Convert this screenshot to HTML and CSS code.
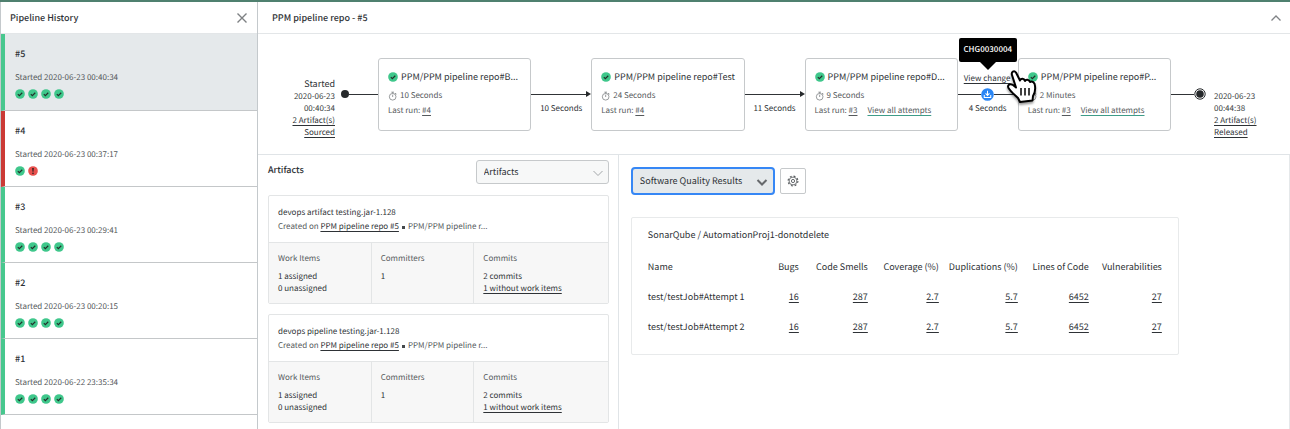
FILE: index.html
```html
<!DOCTYPE html>
<html lang="en">
<head>
<meta charset="utf-8">
<title>Pipeline History</title>
<link rel="stylesheet" href="styles.css">
</head>
<body>
<svg class="defs" aria-hidden="true">
  <symbol id="ok" viewBox="0 0 12 12"><circle cx="6" cy="6" r="5.800" fill="#3fc78b"/><path d="M3.400 6.200l1.800 1.800 3.500-3.500" fill="none" stroke="#23302b" stroke-width="1.400"/></symbol>
  <symbol id="fail" viewBox="0 0 12 12"><circle cx="6" cy="6" r="5.800" fill="#e8504d"/><path d="M5 2.300h2l-.4 4.500h-1.200z" fill="#2b2020"/><circle cx="6" cy="8.800" r="1" fill="#2b2020"/></symbol>
  <symbol id="watch" viewBox="0 0 12 12"><g fill="none" stroke="#777b7e" stroke-width=".9"><circle cx="5.600" cy="6.900" r="4"/><path d="M5.600 7.200V4.400M4 1.400h3.200M5.600 1.400v1.500M8.400 2.400l1.600 1.600M8.900 3.900l.6-.7"/></g></symbol>
  <symbol id="chevron" viewBox="0 0 12 12"><path d="M1.500 4l4.500 4.500L10.500 4" fill="none" stroke="currentColor"/></symbol>
</svg>
<div class="app">
  <aside class="history">
    <header class="bar">
      <h2 class="bar-title">Pipeline History</h2>
      <button class="icon-button" aria-label="Close"><svg class="close" viewBox="0 0 12 12"><path d="M1.500 1.500l9 9M10.500 1.500l-9 9" stroke="#7d8083" stroke-width="1.400"/></svg></button>
    </header>
    <ul class="runs">
      <li class="run run-selected"><h3 class="run-name">#5</h3><p class="run-time">Started 2020-06-23 00:40:34</p><div class="run-icons"><svg class="status"><use href="#ok"/></svg><svg class="status"><use href="#ok"/></svg><svg class="status"><use href="#ok"/></svg><svg class="status"><use href="#ok"/></svg></div></li>
      <li class="run run-failed"><h3 class="run-name">#4</h3><p class="run-time">Started 2020-06-23 00:37:17</p><div class="run-icons"><svg class="status"><use href="#ok"/></svg><svg class="status"><use href="#fail"/></svg></div></li>
      <li class="run"><h3 class="run-name">#3</h3><p class="run-time">Started 2020-06-23 00:29:41</p><div class="run-icons"><svg class="status"><use href="#ok"/></svg><svg class="status"><use href="#ok"/></svg><svg class="status"><use href="#ok"/></svg><svg class="status"><use href="#ok"/></svg></div></li>
      <li class="run"><h3 class="run-name">#2</h3><p class="run-time">Started 2020-06-23 00:20:15</p><div class="run-icons"><svg class="status"><use href="#ok"/></svg><svg class="status"><use href="#ok"/></svg><svg class="status"><use href="#ok"/></svg><svg class="status"><use href="#ok"/></svg></div></li>
      <li class="run"><h3 class="run-name">#1</h3><p class="run-time">Started 2020-06-22 23:35:34</p><div class="run-icons"><svg class="status"><use href="#ok"/></svg><svg class="status"><use href="#ok"/></svg><svg class="status"><use href="#ok"/></svg><svg class="status"><use href="#ok"/></svg></div></li>
    </ul>
  </aside>
  <main class="detail">
    <header class="bar bar-main">
      <h1 class="bar-title">PPM pipeline repo - #5</h1>
      <button class="icon-button" aria-label="Collapse"><svg class="collapse" viewBox="0 0 12 12"><path d="M1.500 8.500L6 4l4.500 4.500" fill="none" stroke="#808386" stroke-width="1.300"/></svg></button>
    </header>
    <section class="flow">
      <div class="flow-end flow-start"><span class="flow-label">Started</span><span>2020-06-23</span><span>00:40:34</span><a href="#">2 Artifact(s)</a><a href="#">Sourced</a></div>
      <div class="edge edge-start"><i class="dot"></i><i class="line"></i></div>
      <article class="stage">
        <h3 class="stage-title"><svg class="status"><use href="#ok"/></svg>PPM/PPM pipeline repo#B...</h3>
        <p class="stage-time"><svg class="status"><use href="#watch"/></svg>10 Seconds</p>
        <p class="stage-last"><span>Last run: <a href="#">#4</a></span></p>
      </article>
      <div class="link"><div class="edge"><i class="line"></i><i class="arrow"></i></div><span>10 Seconds</span></div>
      <article class="stage">
        <h3 class="stage-title"><svg class="status"><use href="#ok"/></svg>PPM/PPM pipeline repo#Test</h3>
        <p class="stage-time"><svg class="status"><use href="#watch"/></svg>24 Seconds</p>
        <p class="stage-last"><span>Last run: <a href="#">#4</a></span></p>
      </article>
      <div class="link"><div class="edge"><i class="line"></i><i class="arrow"></i></div><span>11 Seconds</span></div>
      <article class="stage">
        <h3 class="stage-title"><svg class="status"><use href="#ok"/></svg>PPM/PPM pipeline repo#D...</h3>
        <p class="stage-time"><svg class="status"><use href="#watch"/></svg>9 Seconds</p>
        <p class="stage-last"><span>Last run: <a href="#">#3</a></span><a class="attempts" href="#">View all attempts</a></p>
      </article>
      <div class="link">
        <a class="change" href="#">View change</a>
        <div class="edge"><i class="line"></i><svg class="gate" viewBox="0 0 14 14"><circle cx="7" cy="7" r="6.800" fill="#2a86f5"/><path d="M7 3v4.800M4.900 5.900L7 8l2.100-2.100M3.500 7.500v2.800h7V7.500" fill="none" stroke="#fff" stroke-width="1.100"/></svg><i class="line"></i></div>
        <span>4 Seconds</span>
        <div class="tip" role="tooltip">CHG0030004</div>
        <svg class="hand" viewBox="0 0 32 36"><path d="M6 6C5 3 8 1 10 3.500L14 11.500C15 9 18 9 19 12C20 10 23 10.500 24 13C26 12 29 13 29 17C29.500 21 29 24 27 27L26.500 31.500L14 33L12 29C9 26 5 23 2.500 19C1 16 4 14 7 16L10 18.500Z" fill="#fff" stroke="#000" stroke-width="2" stroke-linejoin="round"/><path d="M15 19v7.500M19 19v7.500M23 19v7.500" stroke="#000" stroke-width="1.500"/></svg>
      </div>
      <article class="stage">
        <h3 class="stage-title"><svg class="status"><use href="#ok"/></svg>PPM/PPM pipeline repo#P...</h3>
        <p class="stage-time"><svg class="status"><use href="#watch"/></svg>2 Minutes</p>
        <p class="stage-last"><span>Last run: <a href="#">#3</a></span><a class="attempts" href="#">View all attempts</a></p>
      </article>
      <div class="edge edge-end"><i class="line"></i><svg class="target" viewBox="0 0 12 12"><circle cx="6" cy="6" r="5.200" fill="#fff" stroke="#26292b"/><circle cx="6" cy="6" r="3.800" fill="#26292b"/></svg></div>
      <div class="flow-end flow-finish"><span>2020-06-23</span><span>00:44:38</span><a href="#">2 Artifact(s)</a><a href="#">Released</a></div>
    </section>
    <div class="panes">
      <section class="artifacts">
        <div class="artifacts-head">
          <h2 class="section-title">Artifacts</h2>
          <div class="picker"><select class="select" aria-label="Result type"><option>Artifacts</option></select><svg class="chevron"><use href="#chevron"/></svg></div>
        </div>
        <article class="card">
          <div class="card-top"><h3 class="card-title">devops artifact testing.jar-1.128</h3><p class="created">Created on <a href="#">PPM pipeline repo #5</a><i class="bullet"></i>PPM/PPM pipeline r...</p></div>
          <dl class="facts">
            <div class="fact"><dt>Work Items</dt><dd>1 assigned</dd><dd>0 unassigned</dd></div>
            <div class="fact"><dt>Committers</dt><dd>1</dd></div>
            <div class="fact"><dt>Commits</dt><dd>2 commits</dd><dd><a href="#">1 without work items</a></dd></div>
          </dl>
        </article>
        <article class="card">
          <div class="card-top"><h3 class="card-title">devops pipeline testing.jar-1.128</h3><p class="created">Created on <a href="#">PPM pipeline repo #5</a><i class="bullet"></i>PPM/PPM pipeline r...</p></div>
          <dl class="facts">
            <div class="fact"><dt>Work Items</dt><dd>1 assigned</dd><dd>0 unassigned</dd></div>
            <div class="fact"><dt>Committers</dt><dd>1</dd></div>
            <div class="fact"><dt>Commits</dt><dd>2 commits</dd><dd><a href="#">1 without work items</a></dd></div>
          </dl>
        </article>
      </section>
      <section class="quality">
        <div class="tools">
          <div class="picker picker-active"><select class="select" aria-label="Report"><option>Software Quality Results</option></select><svg class="chevron"><use href="#chevron"/></svg></div>
          <button class="gear-button" aria-label="Settings"><svg class="gear" viewBox="0 0 12 12"><g fill="none" stroke="#55595c"><circle cx="6" cy="6" r="3.900" stroke-width=".8"/><circle cx="6" cy="6" r="4.900" stroke-width="1.100" stroke-dasharray="1.924 1.924"/><circle cx="6" cy="6" r="1.600" stroke-width=".9"/></g></svg></button>
        </div>
        <div class="report">
          <h2 class="report-title">SonarQube / AutomationProj1-donotdelete</h2>
          <table class="metrics">
            <colgroup><col class="c-name"><col class="c-bugs"><col class="c-smells"><col class="c-cover"><col class="c-dup"><col class="c-lines"><col class="c-vuln"></colgroup>
            <thead><tr><th>Name</th><th>Bugs</th><th>Code Smells</th><th>Coverage (%)</th><th>Duplications (%)</th><th>Lines of Code</th><th>Vulnerabilities</th></tr></thead>
            <tbody>
              <tr><td>test/testJob#Attempt 1</td><td><a href="#">16</a></td><td><a href="#">287</a></td><td><a href="#">2.7</a></td><td><a href="#">5.7</a></td><td><a href="#">6452</a></td><td><a href="#">27</a></td></tr>
              <tr><td>test/testJob#Attempt 2</td><td><a href="#">16</a></td><td><a href="#">287</a></td><td><a href="#">2.7</a></td><td><a href="#">5.7</a></td><td><a href="#">6452</a></td><td><a href="#">27</a></td></tr>
            </tbody>
          </table>
        </div>
      </section>
    </div>
  </main>
</div>
</body>
</html>
```
FILE: styles.css
```css
* { box-sizing: border-box; }
body, h1, h2, h3, p, ul, dl, dd { margin: 0; padding: 0; }
body {
  font-family: "Noto Sans CJK SC", "Noto Sans", sans-serif;
  font-size: 8px;
  line-height: 12px;
  text-rendering: geometricPrecision;
  color: #2e3236;
  background: #fff;
}
h1, h2, h3 { font-weight: 500; }
a { color: inherit; text-decoration: underline; text-underline-offset: 2px; }
button { padding: 0; border: 0; background: none; font: inherit; }
svg { display: block; flex: none; }
i { display: block; flex: none; }
.defs { display: none; }

.app { display: grid; grid-template-columns: 1fr 4fr; min-height: 100vh; border-top: 2px solid #4f806f; }
.history { border-left: 1px solid #c4c9cc; border-right: 1px solid #c4c9cc; }
.detail { min-width: 0; display: flex; flex-direction: column; }

.bar { display: flex; align-items: center; justify-content: space-between; height: 32px; padding: 0 9px; border-bottom: 1px solid #e3e6e8; }
.bar-main { padding: 0 8px 0 14px; }
.bar-title { font-size: 9px; line-height: 16px; }
.icon-button { display: flex; }
.close, .collapse { width: 12px; height: 12px; }

.runs { list-style: none; }
.run { padding: 13px 10px 9px; border-left: 4px solid #48c78e; border-bottom: 1px solid #c4c7c9; }
.run-selected { padding-bottom: 10px; background: #e5e9eb; }
.run-failed { border-left-color: #cb3a36; }
.run-name { font-size: 9px; line-height: 14px; margin-bottom: 10px; }
.run-time { line-height: 14px; margin-bottom: 3px; color: #55595c; }
.run-icons { display: flex; gap: 3px; }
.status { width: 10px; height: 10px; }
.run-icons .status { margin: 1px 0; }

.flow { display: flex; align-items: center; height: 121px; border-bottom: 1px solid #e0e4e7; }
.flow-end { display: flex; flex-direction: column; flex: none; color: #3a3e41; }
.flow-end a { color: #2e3236; }
.flow-start { width: 77px; padding-top: 27px; text-align: right; }
.flow-finish { width: 84px; padding: 41px 0 0 8px; }
.flow-label { font-size: 9px; line-height: 14px; color: #2e3236; }
.edge { display: flex; align-items: center; }
.edge-start { width: 37px; margin-left: 6px; }
.edge-end { width: 35px; }
.line { flex: 1; height: 1px; background: #303336; }
.dot { width: 8px; height: 8px; border-radius: 50%; background: #26292b; }
.target { width: 12px; height: 12px; }
.arrow { border: 3px solid transparent; border-left: 5px solid #26292b; border-right: 0; }
.stage { flex: 1; min-width: 0; height: 73px; padding: 10px 9px; border: 1px solid #c6c9cb; border-radius: 3px; color: #55595c; white-space: nowrap; }
.stage-title { display: flex; align-items: center; gap: 3px; margin-bottom: 3px; font-size: 9px; line-height: 16px; color: #2e3236; font-weight: 400; }
.stage-time { display: flex; align-items: center; gap: 2px; line-height: 16px; }
.stage-last { display: flex; gap: 10px; line-height: 14px; }
.attempts { text-decoration-color: #3e9c88; }
.link { position: relative; flex: none; width: 60px; text-align: center; white-space: nowrap; }
.link .edge { height: 14px; }
.link > span { position: absolute; top: 16px; left: 0; right: 0; }
.change { position: absolute; bottom: 16px; left: 6px; }
.gate { width: 13px; height: 13px; }
.tip { position: absolute; bottom: 39px; left: 1px; width: 58px; padding: 6px 0; border-radius: 2px; background: #000; color: #fff; font-weight: 500; }
.tip::after { content: ""; position: absolute; top: 100%; left: 21px; border: 8px solid transparent; border-top-color: #000; border-bottom: 0; }
.hand { position: absolute; top: -18px; left: 48px; width: 32px; height: 36px; filter: drop-shadow(0 2px 1px #0006); z-index: 1; }

.panes { flex: 1; display: grid; grid-template-columns: 35% 1fr; border-right: 1px solid #e5e8ea; }
.artifacts { padding: 5px 9px 5px 10px; border-right: 1px solid #e0e4e7; }
.artifacts-head { display: flex; justify-content: space-between; align-items: flex-start; margin-bottom: 11px; }
.section-title { font-size: 9px; line-height: 20px; }
.picker { position: relative; width: 133px; height: 24px; }
.select { appearance: none; width: 100%; height: 100%; padding: 0 7px; border: 1px solid #c6c9cb; border-radius: 3px; background: #f7f8f8; color: #2e3236; font: inherit; font-size: 9px; text-rendering: inherit; }
.chevron { position: absolute; right: 5px; top: 7px; width: 12px; height: 12px; color: #a3a7aa; pointer-events: none; }
.card { border: 1px solid #e3e5e6; border-radius: 2px; margin-bottom: 10px; }
.card-top { padding: 9px 9px 8px; }
.card-title { font-size: 8px; line-height: 15px; font-weight: 400; }
.created { display: flex; align-items: center; line-height: 14px; white-space: pre; color: #55595c; }
.created a { color: #2e3236; }
.bullet { width: 3px; height: 3px; margin: 0 3px; background: #44484b; }
.facts { display: grid; grid-template-columns: 102fr 103fr 135fr; margin: 0; border-top: 1px solid #e3e5e6; background: #f7f7f7; }
.fact { padding: 10px 9px 8px; }
.fact + .fact { border-left: 1px solid #e3e5e6; }
.fact dt { color: #55595c; margin-bottom: 6px; }

.quality { padding: 12px; }
.tools { display: flex; align-items: center; gap: 5px; margin-bottom: 22px; }
.picker-active { width: 144px; height: 28px; }
.picker-active .select { border: 2px solid #3687f5; border-radius: 4px; background: #e5e9eb; }
.picker-active .chevron { top: 9px; right: 7px; color: #66696c; stroke-width: 2px; }
.gear-button { display: flex; align-items: center; justify-content: center; width: 26px; height: 26px; border: 1px solid #c6c9cb; border-radius: 2px; }
.gear { width: 12px; height: 12px; }
.report { max-width: 548px; padding: 9px 16px 12px; border: 1px solid #e8eaeb; border-radius: 2px; }
.report-title { font-size: 9px; line-height: 16px; font-weight: 400; margin-bottom: 9px; }
.metrics { width: 100%; table-layout: fixed; border-collapse: collapse; font-size: 9px; line-height: 16px; white-space: nowrap; }
.metrics th, .metrics td { padding: 7px 0; text-align: right; font-weight: 400; }
.metrics th:first-child, .metrics td:first-child { text-align: left; }
.c-bugs { width: 30px; }
.c-smells { width: 69px; }
.c-cover { width: 71px; }
.c-dup { width: 79px; }
.c-lines { width: 71px; }
.c-vuln { width: 73px; }
```
